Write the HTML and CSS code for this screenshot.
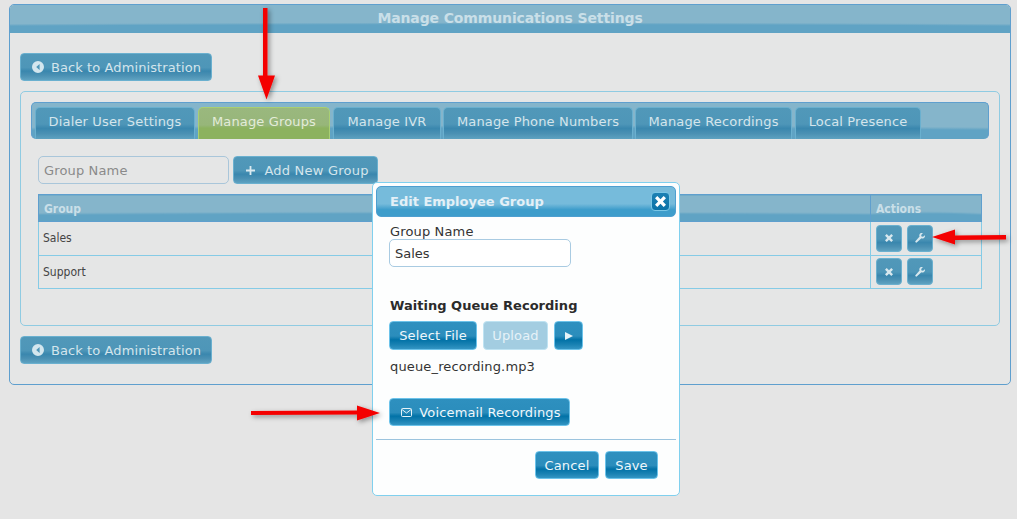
FILE: index.html
```html
<!DOCTYPE html>
<html lang="en">
<head>
<meta charset="utf-8">
<title>Manage Communications Settings</title>
<link rel="stylesheet" href="styles.css">
</head>
<body>
<svg width="0" height="0" class="defs">
  <symbol id="i-back" viewBox="0 0 12 12"><path fill="#d3e6ee" fill-rule="evenodd" d="M6 0a6 6 0 1 1 0 12A6 6 0 0 1 6 0zM7.600 3 4.200 6l3.400 3z"/></symbol>
  <symbol id="i-plus" viewBox="0 0 9 9"><path fill="#dbeaf0" d="M3.600 0h1.800v3.600H9v1.800H5.400V9H3.600V5.400H0V3.600h3.600z"/></symbol>
  <symbol id="i-x" viewBox="0 0 8 8"><path fill="#d8e8ee" d="M1.700 0 4 2.300 6.300 0 8 1.700 5.700 4 8 6.300 6.300 8 4 5.700 1.700 8 0 6.300 2.300 4 0 1.700z"/></symbol>
  <symbol id="i-wrench" viewBox="0 0 12 12"><path fill="#d8e8ee" d="M11.800 2.600 9.700 4.600 7.800 4.200 7.400 2.300 9.400.2C7.800-.3 6 .3 5.400 1.700c-.4.900-.3 1.800.1 2.600L.7 9.500c-.5.500-.5 1.200 0 1.700s1.200.5 1.700 0l5.300-5c.8.400 1.700.5 2.600.1 1.400-.6 2-2.300 1.500-3.700z"/></symbol>
  <symbol id="i-mail" viewBox="0 0 11 9"><path fill="none" stroke="#e6f3f8" d="M1.500.5h8a1 1 0 0 1 1 1v6a1 1 0 0 1-1 1h-8a1 1 0 0 1-1-1v-6a1 1 0 0 1 1-1zM1 1.500l4.500 3.500L10 1.500"/></symbol>
</svg>

<main class="panel">
  <h1 class="panel-title gloss">Manage Communications Settings</h1>
  <div class="panel-body">
    <button class="btn btn-muted btn-back" type="button"><svg class="ico-back"><use href="#i-back"/></svg>Back to Administration</button>

    <section class="tabs-box">
      <nav class="tabs gloss">
        <a class="tab tab-1">Dialer User Settings</a>
        <a class="tab tab-active tab-2">Manage Groups</a>
        <a class="tab tab-3">Manage IVR</a>
        <a class="tab tab-4">Manage Phone Numbers</a>
        <a class="tab tab-5">Manage Recordings</a>
        <a class="tab tab-6">Local Presence</a>
      </nav>

      <div class="add-row">
        <input class="group-input" type="text" placeholder="Group Name">
        <button class="btn btn-muted btn-add" type="button"><svg class="ico-plus"><use href="#i-plus"/></svg>Add New Group</button>
      </div>

      <table class="grid">
        <thead>
          <tr><th class="gloss">Group</th><th class="gloss col-actions">Actions</th></tr>
        </thead>
        <tbody>
          <tr>
            <td>Sales</td>
            <td class="col-actions"><div class="actions">
              <button class="btn btn-muted icon-btn" type="button"><svg class="ico-x"><use href="#i-x"/></svg></button>
              <button class="btn btn-muted icon-btn" type="button"><svg class="ico-wrench"><use href="#i-wrench"/></svg></button>
            </div></td>
          </tr>
          <tr>
            <td>Support</td>
            <td class="col-actions"><div class="actions">
              <button class="btn btn-muted icon-btn" type="button"><svg class="ico-x"><use href="#i-x"/></svg></button>
              <button class="btn btn-muted icon-btn" type="button"><svg class="ico-wrench"><use href="#i-wrench"/></svg></button>
            </div></td>
          </tr>
        </tbody>
      </table>
    </section>

    <button class="btn btn-muted btn-back" type="button"><svg class="ico-back"><use href="#i-back"/></svg>Back to Administration</button>
  </div>
</main>

<aside class="dialog">
  <header class="dialog-head">
    <span>Edit Employee Group</span>
    <button class="dialog-close" type="button"><svg viewBox="0 0 8 8"><path fill="#fff" d="M1.700 0 4 2.300 6.300 0 8 1.700 5.700 4 8 6.300 6.300 8 4 5.700 1.700 8 0 6.300 2.300 4 0 1.700z"/></svg></button>
  </header>
  <div class="dialog-body">
    <label class="field-label">Group Name</label>
    <input class="dialog-input" type="text" value="Sales">
    <h2 class="sub-title">Waiting Queue Recording</h2>
    <div class="file-row">
      <button class="btn btn-bright btn-file" type="button">Select File</button>
      <button class="btn btn-disabled btn-upload" type="button">Upload</button>
      <button class="btn btn-bright btn-play" type="button"><span class="play-tri"></span></button>
    </div>
    <p class="file-name">queue_recording.mp3</p>
    <button class="btn btn-bright btn-voicemail" type="button"><svg class="ico-mail"><use href="#i-mail"/></svg>Voicemail Recordings</button>
  </div>
  <footer class="dialog-foot">
    <button class="btn btn-bright btn-cancel" type="button">Cancel</button>
    <button class="btn btn-bright btn-save" type="button">Save</button>
  </footer>
</aside>

<svg class="arrows" width="1017" height="519" viewBox="0 0 1017 519">
  <defs>
    <filter id="arrow-shadow" x="-30%" y="-30%" width="170%" height="170%"><feDropShadow dx="2" dy="2" stdDeviation="2.500" flood-color="#000" flood-opacity=".4"/></filter>
  </defs>
  <g fill="#f40000" filter="url(#arrow-shadow)">
    <path d="M263 8h4.500v67.500h7.500l-8.500 24-8.500-24h5z"/>
    <path d="M932 237l23-7.500v6l51-.5v4.500l-51 .5v4.500z"/>
    <path d="M251 411l106-.5v-5l23 7.500-23 7.500v-6l-106 .5z"/>
  </g>
</svg>
</body>
</html>
```

FILE: styles.css
```css
* { box-sizing: border-box; }

html, body { margin: 0; height: 100%; }

body {
  position: relative;
  width: 1017px;
  height: 519px;
  overflow: hidden;
  padding: 4px 6px 0 9px;
  background: #e5e5e5;
  font-family: "DejaVu Sans", Verdana, sans-serif;
  font-size: 13px;
  letter-spacing: .15px;
  color: #333;
}

.defs { position: absolute; }

.gloss {
  background:
    radial-gradient(ellipse 220% 200% at 50% 265%, rgba(133,181,203,0) 97.500%, #85b5cb 101.500%),
    #60a3c4;
}

.panel {
  width: 1002px;
  height: 381px;
  border: 1px solid #5f9fce;
  border-radius: 5px;
  background: #e5e6e6;
}

.panel-title {
  margin: 0;
  height: 28px;
  line-height: 27px;
  text-align: center;
  font-size: 14px;
  font-weight: bold;
  letter-spacing: -.13px;
  color: #c9dfe8;
  border-radius: 4px 4px 0 0;
}

.panel-body { padding: 20px 10px 0; }

.btn {
  display: inline-flex;
  align-items: center;
  justify-content: center;
  height: 28px;
  padding: 0;
  border-radius: 4px;
  font-family: inherit;
  font-size: 13px;
  letter-spacing: .15px;
}

.btn-muted {
  border: 1px solid #6ab0cf;
  color: #d4e5ec;
  background: linear-gradient(#5198b9 0, #4e96b8 52%, #3a87ae 66%, #4a90b3 82%, #5ea2c1 100%);
}

.btn-bright {
  border: 1px solid #6cc3ea;
  color: #eef7fb;
  background: linear-gradient(#2e90bf 0, #2b8dbc 52%, #0272a7 66%, #1a82b3 84%, #3395c3 100%);
}

.btn-disabled {
  border: 1px solid #bfe3f2;
  color: #e6f2f8;
  background: #a3cde1;
}

.btn-back { width: 192px; letter-spacing: .1px; }

.ico-back { width: 12px; height: 12px; margin-right: 7px; margin-left: 1px; }
.ico-plus { width: 9px; height: 9px; margin-right: 9px; }
.ico-x { width: 8px; height: 8px; }
.ico-wrench { width: 10px; height: 10px; }
.ico-mail { width: 11px; height: 9px; margin-right: 7px; }

.tabs-box {
  height: 235px;
  margin: 10px 0;
  padding: 10px 10px 0;
  border: 1px solid #8fcbe2;
  border-radius: 5px;
}

.tabs {
  display: flex;
  gap: 2px;
  height: 37px;
  padding: 4px 0 0 3px;
  border: 1px solid #5f9fce;
  border-bottom: 0;
  border-radius: 5px;
}

.tab {
  height: 32px;
  line-height: 28px;
  text-align: center;
  white-space: nowrap;
  color: #d4e5ec;
  border: 1px solid #6ab0cf;
  border-bottom: 0;
  border-radius: 5px 5px 0 0;
  background: linear-gradient(#5198b9 0, #4e96b8 52%, #3a87ae 66%, #4a90b3 82%, #5ea2c1 100%);
}

.tab-1 { width: 160px; margin-right: 1px; }
.tab-2 { width: 132px; margin-right: 1px; }
.tab-3 { width: 108px; }
.tab-4 { width: 190px; }
.tab-5 { width: 157px; margin-right: 1px; }
.tab-6 { width: 126px; }

.tab-active {
  color: #e3ecd8;
  border-color: #a9cf72;
  background: linear-gradient(#9ab87e 0, #97b67a 55%, #8cb25f 65%, #8cb25f 100%);
}

.add-row {
  display: flex;
  gap: 4px;
  margin: 17px 0 10px 7px;
}

.group-input {
  width: 191px;
  height: 28px;
  padding: 0 5px;
  border: 1px solid #a9c6da;
  border-radius: 5px;
  background: #e5e6e6;
  font-family: inherit;
  font-size: 13px;
  letter-spacing: .15px;
}

.group-input::placeholder { color: #8a8a8a; opacity: 1; }

.btn-add { width: 145px; padding-left: 4px; letter-spacing: .22px; }

.grid {
  width: 944px;
  margin-left: 7px;
  border-collapse: collapse;
  font-family: "DejaVu Sans Condensed", "DejaVu Sans", sans-serif;
  font-size: 12px;
  letter-spacing: 0;
  color: #444;
}

.grid th {
  height: 27px;
  padding: 0 5px 5px;
  border: 1px solid #5f9fce;
  text-align: left;
  color: #c9dfe8;
  font-size: 12px;
  vertical-align: bottom;
}

.grid td {
  height: 33.500px;
  padding: 0 4px;
  border: 1px solid #85cbe6;
}

.col-actions { width: 111px; }

.grid td.col-actions { padding: 0 5px; }

.actions { display: flex; gap: 5px; }

.icon-btn { width: 26px; height: 27px; }

.dialog {
  position: absolute;
  left: 372px;
  top: 182px;
  width: 308px;
  height: 314px;
  padding: 3px;
  border: 1px solid #80d0ee;
  border-radius: 5px;
  background: #fdfefe;
}

.dialog-head {
  display: flex;
  align-items: center;
  justify-content: space-between;
  height: 31px;
  padding: 0 5px 0 13px;
  border: 1px solid #4e9fd0;
  border-radius: 5px;
  font-weight: bold;
  letter-spacing: 0;
  color: #e3f0f7;
  background: linear-gradient(#76bbdb 0, #76bbdb 58%, #3e9dcb 78%, #3e9dcb 100%);
}

.dialog-close {
  display: flex;
  align-items: center;
  justify-content: center;
  width: 19px;
  height: 19px;
  padding: 0;
  border: 1px solid #7cc7e6;
  border-radius: 4px;
  background: linear-gradient(#1c80b3 0, #0a72a8 100%);
}

.dialog-close svg { width: 11px; height: 11px; }

.dialog-body { padding: 7px 13px 0; }

.field-label { display: block; height: 15px; line-height: 15px; padding-left: 1px; }

.dialog-input {
  display: block;
  width: 182px;
  height: 28px;
  padding: 0 5px;
  border: 1px solid #a9cbe2;
  border-radius: 5px;
  background: #fff;
  font-family: inherit;
  font-size: 13px;
  color: #333;
}

.sub-title {
  margin: 30px 0 7px 1px;
  height: 17px;
  line-height: 17px;
  font-size: 13px;
  font-weight: bold;
  letter-spacing: .03px;
  color: #2b2b2b;
}

.file-row { display: flex; gap: 6px; }

.file-row .btn { height: 29px; }

.btn-file { width: 88px; }
.btn-upload { width: 65px; }
.btn-play { width: 29px; }

.play-tri {
  width: 0;
  height: 0;
  border-left: 8px solid #e6f3f8;
  border-top: 4px solid transparent;
  border-bottom: 4px solid transparent;
}

.file-name { margin: 9px 0 23px 1px; height: 16px; line-height: 16px; }

.btn-voicemail { display: flex; width: 181px; padding-left: 3px; }

.dialog-foot {
  display: flex;
  justify-content: flex-end;
  gap: 6px;
  margin-top: 13px;
  padding: 11px 18px 0 0;
  border-top: 1px solid #9cc4de;
}

.btn-cancel { width: 64px; }
.btn-save { width: 53px; }

.arrows {
  position: absolute;
  left: 0;
  top: 0;
  pointer-events: none;
}
```
